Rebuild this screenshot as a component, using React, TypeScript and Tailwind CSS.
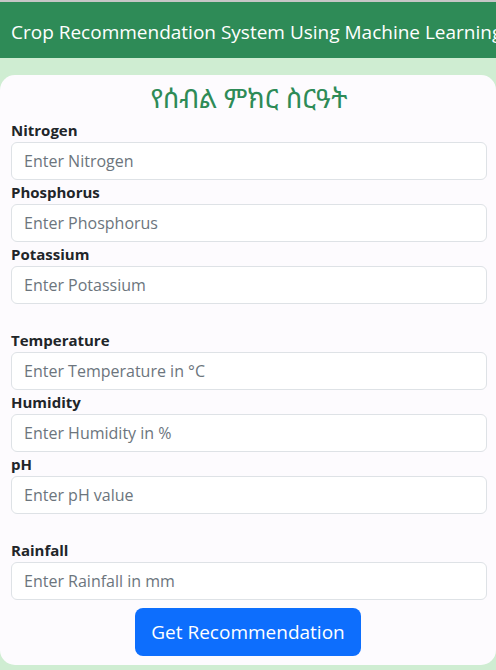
export default function App() {
  const fields = [
    { label: "Nitrogen", ph: "Enter Nitrogen" },
    { label: "Phosphorus", ph: "Enter Phosphorus" },
    { label: "Potassium", ph: "Enter Potassium", gap: true },
    { label: "Temperature", ph: "Enter Temperature in °C" },
    { label: "Humidity", ph: "Enter Humidity in %" },
    { label: "pH", ph: "Enter pH value", gap: true },
    { label: "Rainfall", ph: "Enter Rainfall in mm" },
  ];

  return (
    <div
      className="min-h-[670px] bg-[#cfedd2] border-t-2 border-[#c6c6c6] overflow-hidden"
      style={{ fontFamily: '"Segoe UI", "Open Sans", "Noto Sans", sans-serif' }}
    >
      {/* Navbar */}
      <div className="h-[56px] bg-[#2e8b57] flex items-center pl-[11px] pt-[4px] whitespace-nowrap overflow-hidden">
        <span className="text-white text-[19px]">Crop Recommendation System Using Machine Learning</span>
      </div>

      {/* Card */}
      <div className="mt-[17px] bg-[#fdfbfe] rounded-[15px] pl-[11px] pr-[9px] pb-[9px]">
        <h2
          className="h-[43px] text-center text-[#2e8b57] text-[27px] leading-[45px]"
          style={{ fontFamily: '"Noto Sans Ethiopic", "Abyssinica SIL", "Noto Sans", serif' }}
        >
          የሰብል ምክር ስርዓት
        </h2>
        {fields.map((f) => (
          <div key={f.label}>
            <label className="block font-bold text-[15px] leading-6 text-[#212529]">{f.label}</label>
            <input
              className="block w-full h-[38px] px-3 bg-white border border-[#dee2e6] rounded-[6px] text-[16px] placeholder:text-[#6c757d] outline-none"
              placeholder={f.ph}
            />
            {f.gap && <div className="h-6" />}
          </div>
        ))}
        <div className="flex justify-center mt-2 pr-[2px]">
          <button className="h-[48px] px-4 bg-[#0d6efd] text-white text-[19px] rounded-[8px]">
            Get Recommendation
          </button>
        </div>
      </div>
    </div>
  );
}
